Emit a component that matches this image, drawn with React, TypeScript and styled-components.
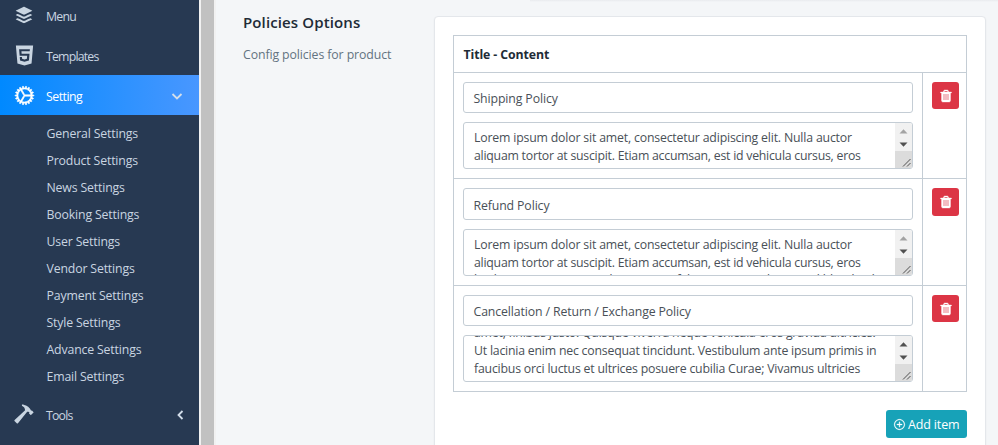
import React from 'react';
import styled, { createGlobalStyle } from 'styled-components';
import { IoLogoBuffer, IoLogoHtml5, IoIosCog, IoMdHammer, IoIosAddCircleOutline, IoIosColorPalette } from 'react-icons/io';

const Global = createGlobalStyle`
  * { box-sizing: border-box; }
  body { margin: 0; background: #f4f6f8; overflow: hidden; font: 12.3px/18px "Open Sans", sans-serif; color: #495057; }
  ul { list-style: none; margin: 0; padding: 0; }
`;

const Page = styled.div`
  display: grid;
  grid-template-columns: 199px 17px 1fr;
  height: 445px;
  overflow: hidden;
`;

const Sidebar = styled.nav`
  background: #273952;
  overflow: hidden;
  padding-top: 36px;
  margin-top: -41px;
  height: 486px;
`;

const MenuItem = styled.div<{ $active?: boolean }>`
  display: flex;
  align-items: center;
  height: 40px;
  padding: 0 14px;
  color: ${p => (p.$active ? '#fff' : '#c9d5e1')};
  background: ${p => (p.$active ? 'linear-gradient(90deg, #0089ff, #4997ff)' : 'transparent')};
`;

const MenuIcon = styled.span<{ $size?: number; $bold?: boolean; $flip?: boolean }>`
  display: flex;
  align-items: center;
  justify-content: center;
  width: 20px;
  height: 20px;
  margin-right: 12px;
  svg {
    flex: none;
    width: ${p => p.$size ?? 22}px;
    height: ${p => p.$size ?? 22}px;
    stroke-width: ${p => (p.$bold ? 14 : 0)};
    transform: ${p => (p.$flip ? 'scaleX(-1)' : 'none')};
  }
`;

const MenuLabel = styled.span<{ $spacing: number }>`
  flex: 1;
  padding-top: 3px;
  letter-spacing: ${p => p.$spacing}px;
`;

const Chevron = styled.svg<{ $left?: boolean }>`
  width: 12px;
  height: 12px;
  margin-right: ${p => (p.$left ? -1 : 2)}px;
  fill: none;
  stroke: #d3deea;
  stroke-width: 1.8;
`;

const SubMenu = styled.ul`
  padding: 5px 0 4px;
`;

const SubItem = styled.li`
  height: 27px;
  padding-left: 46.5px;
  line-height: 27px;
  color: #c9d5e1;
  letter-spacing: -0.16px;
`;

const ScrollTrack = styled.div`
  background: #f1f1f1;
  padding: 0 2px;
`;

const ScrollThumb = styled.div`
  height: 100%;
  background: #c1c1c1;
`;

const Main = styled.main`
  display: grid;
  grid-template-columns: 192px 551px;
  padding: 16px 0 0 27px;
  align-items: start;
  background: linear-gradient(#e9ebee, #f4f6f8) 314px 0 / 100% 2px no-repeat;
`;

const Heading = styled.h3`
  margin: -4px 0 0;
  font: 600 15px/21px "Open Sans", sans-serif;
  letter-spacing: 0.12px;
  color: #212b36;
`;

const HelpText = styled.p`
  margin: 13px 0 0;
  color: #637381;
  letter-spacing: -0.1px;
`;

const Card = styled.section`
  height: 450px;
  margin-left: -1px;
  padding: 18px 18px 0;
  background: #fff;
  border: 1px solid #e4e7eb;
  border-radius: 4px;
  box-shadow: 0 1px 2px rgba(0, 0, 0, 0.06);
`;

const Table = styled.div`
  width: 514px;
  border: 1px solid #c4cdd5;
  border-bottom: 0;
`;

const TableHead = styled.div`
  height: 37px;
  padding: 10px 9.5px 0;
  font-size: 12.3px;
  font-weight: 700;
  letter-spacing: -0.1px;
  line-height: 18px;
  color: #212b36;
  border-bottom: 1px solid #c4cdd5;
`;

const Row = styled.div<{ $height: number }>`
  display: grid;
  grid-template-columns: 468px 1fr;
  height: ${p => p.$height}px;
  border-bottom: 1px solid #c4cdd5;
`;

const Fields = styled.div`
  padding: 9px;
  display: flex;
  flex-direction: column;
  gap: 9px;
`;

const ActionCell = styled.div`
  display: flex;
  align-items: flex-start;
  padding: 9px;
  border-left: 1px solid #c4cdd5;
`;

const Field = styled.div`
  display: flex;
  flex: 1;
  align-items: flex-end;
  padding: 0 9.5px 4px;
  border: 1px solid #c4cdd5;
  border-radius: 3px;
  line-height: 18px;
  letter-spacing: -0.12px;
`;

const Area = styled.div`
  display: flex;
  height: 47px;
  border: 1px solid #c4cdd5;
  border-radius: 3px;
  overflow: hidden;
`;

const AreaText = styled.div<{ $scrolled?: boolean }>`
  flex: 1;
  min-width: 0;
  padding-left: 10px;
  margin-top: ${p => (p.$scrolled ? -12 : 6)}px;
  white-space: nowrap;
`;

const Line = styled.div<{ $spacing: number; $lift?: boolean }>`
  height: 18px;
  margin-top: ${p => (p.$lift ? -1 : 0)}px;
  letter-spacing: ${p => p.$spacing}px;
`;

const AreaScroll = styled.svg`
  flex: none;
  width: 17px;
  height: 45px;
`;

const DeleteButton = styled.button<{ $height: number }>`
  display: flex;
  align-items: center;
  justify-content: center;
  width: 27px;
  height: ${p => p.$height}px;
  padding: 0;
  border: 0;
  border-radius: 3px;
  background: #dc3545;
  svg { width: 14px; height: 14px; fill: #fff; stroke: #fff; stroke-width: 45; }
`;

const Footer = styled.div`
  display: flex;
  justify-content: flex-end;
  width: 514px;
  padding-top: 18px;
`;

const AddButton = styled.button`
  display: flex;
  align-items: center;
  width: 81px;
  height: 28px;
  padding: 1px 0 0 7px;
  border: 0;
  border-radius: 3px;
  background: #17a2b8;
  color: #fff;
  font: 12.5px/18px "Open Sans", sans-serif;
  letter-spacing: -0.15px;
  white-space: nowrap;
  svg { flex: none; width: 13px; height: 13px; margin-right: 2px; stroke: #fff; stroke-width: 12; }
`;

const TrashIcon = () => (
  <svg viewBox="0 0 1792 1792">
    <path d="M704 1376v-704q0-14-9-23t-23-9h-64q-14 0-23 9t-9 23v704q0 14 9 23t23 9h64q14 0 23-9t9-23zm256 0v-704q0-14-9-23t-23-9h-64q-14 0-23 9t-9 23v704q0 14 9 23t23 9h64q14 0 23-9t9-23zm256 0v-704q0-14-9-23t-23-9h-64q-14 0-23 9t-9 23v704q0 14 9 23t23 9h64q14 0 23-9t9-23zm-544-992h448l-48-117q-7-9-17-11h-317q-10 2-17 11zm928 32v64q0 14-9 23t-23 9h-96v948q0 83-47 143.5t-113 60.5h-832q-66 0-113-58.5t-47-141.5v-952h-96q-14 0-23-9t-9-23v-64q0-14 9-23t23-9h309l70-167q15-37 54-63t79-26h320q40 0 79 26t54 63l70 167h309q14 0 23 9t9 23z" />
  </svg>
);

const Scroller = ({ up }: { up?: boolean }) => (
  <AreaScroll viewBox="0 0 17 45">
    <path d="M0 0h17v45H0z" fill="#f1f1f1" />
    <path d="M0 28h17v17H0z" fill="#dcdcdc" />
    <path d="M4.5 10.5h8L8.5 6.2z" fill={up ? '#505050' : '#a3a3a3'} />
    <path d="M4.5 19.5h8L8.5 23.7z" fill="#505050" />
    <path d="M8 43.5L15.5 36M12 43.5L15.5 40" stroke="#505050" strokeWidth="1" fill="none" />
  </AreaScroll>
);

type Policy = { title: string; height: number; scrolled?: boolean; lines: [string, number][] };

const lorem: [string, number][] = [
  ['Lorem ipsum dolor sit amet, consectetur adipiscing elit. Nulla auctor', -0.18],
  ['aliquam tortor at suscipit. Etiam accumsan, est id vehicula cursus, eros', -0.24],
];

const policies: Policy[] = [
  { title: 'Shipping Policy', height: 106, lines: lorem },
  {
    title: 'Refund Policy',
    height: 107,
    lines: [...lorem, ['ligula suscipit massa, sed neque nec felis consequat dictum vel blandit id', -0.2]],
  },
  {
    title: 'Cancellation / Return / Exchange Policy',
    height: 106,
    scrolled: true,
    lines: [
      ['amet, finibus justo. Quisque viverra neque vehicula eros gravida ultricies.', -0.22],
      ['Ut lacinia enim nec consequat tincidunt. Vestibulum ante ipsum primis in', -0.21],
      ['faucibus orci luctus et ultrices posuere cubilia Curae; Vivamus ultricies', -0.2],
    ],
  },
];

const settings = ['General', 'Product', 'News', 'Booking', 'User', 'Vendor', 'Payment', 'Style', 'Advance', 'Email'];

export default function App() {
  return (
    <>
      <Global />
      <Page>
        <Sidebar>
          <MenuItem><MenuIcon $size={22}><IoLogoBuffer /></MenuIcon><MenuLabel $spacing={-0.75}>Menu</MenuLabel></MenuItem>
          <MenuItem><MenuIcon $size={23}><IoLogoHtml5 /></MenuIcon><MenuLabel $spacing={-0.8}>Templates</MenuLabel></MenuItem>
          <MenuItem $active>
            <MenuIcon $size={23} $bold><IoIosCog /></MenuIcon>
            <MenuLabel $spacing={-0.5}>Setting</MenuLabel>
            <Chevron viewBox="0 0 12 12"><path d="M1.5 5L6 9.5l4.5-4.5" /></Chevron>
          </MenuItem>
          <SubMenu>
            {settings.map(name => <SubItem key={name}>{name} Settings</SubItem>)}
          </SubMenu>
          <MenuItem>
            <MenuIcon $flip><IoMdHammer /></MenuIcon>
            <MenuLabel $spacing={-0.8}>Tools</MenuLabel>
            <Chevron $left viewBox="0 0 12 12"><path d="M8.5 3L4.5 7l4 4" /></Chevron>
          </MenuItem>
          <MenuItem><MenuIcon><IoIosColorPalette /></MenuIcon></MenuItem>
        </Sidebar>
        <ScrollTrack><ScrollThumb /></ScrollTrack>
        <Main>
          <div>
            <Heading>Policies Options</Heading>
            <HelpText>Config policies for product</HelpText>
          </div>
          <Card>
            <Table>
              <TableHead>Title - Content</TableHead>
              {policies.map(p => (
                <Row key={p.title} $height={p.height}>
                  <Fields>
                    <Field>{p.title}</Field>
                    <Area>
                      <AreaText $scrolled={p.scrolled}>
                        {p.lines.map(([text, spacing], i) => (
                          <Line key={text} $spacing={spacing} $lift={i === 2 && !p.scrolled}>{text}</Line>
                        ))}
                      </AreaText>
                      <Scroller up={p.scrolled} />
                    </Area>
                  </Fields>
                  <ActionCell><DeleteButton $height={p.height - 79} aria-label="Delete"><TrashIcon /></DeleteButton></ActionCell>
                </Row>
              ))}
            </Table>
            <Footer><AddButton><IoIosAddCircleOutline />Add item</AddButton></Footer>
          </Card>
        </Main>
      </Page>
    </>
  );
}
